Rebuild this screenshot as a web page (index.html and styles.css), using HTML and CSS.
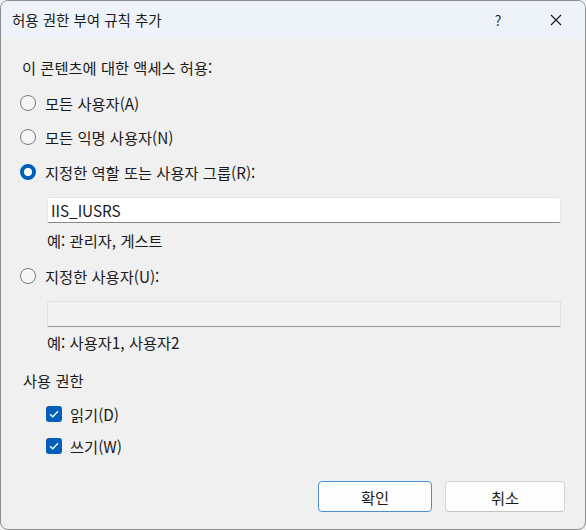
FILE: index.html
```html
<!DOCTYPE html>
<html lang="ko">
<head>
<meta charset="utf-8">
<link rel="stylesheet" href="styles.css">
</head>
<body>
<div class="window">
  <div class="titlebar">
    <div class="title">허용 권한 부여 규칙 추가</div>
    <div class="caption-btn help">?</div>
    <div class="caption-btn close">
      <svg width="12" height="12" viewBox="0 0 12 12"><path d="M1 1 L11 11 M11 1 L1 11" stroke="#1a1a1a" stroke-width="1.1" fill="none"/></svg>
    </div>
  </div>
  <div class="content">
    <div class="label">이 콘텐츠에 대한 액세스 허용:</div>
    <div class="radio-row r1"><span class="radio"></span><span>모든 사용자(A)</span></div>
    <div class="radio-row r2"><span class="radio"></span><span>모든 익명 사용자(N)</span></div>
    <div class="radio-row r3"><span class="radio checked"></span><span>지정한 역할 또는 사용자 그룹(R):</span></div>
    <div class="field">IIS_IUSRS</div>
    <div class="hint">예: 관리자, 게스트</div>
    <div class="radio-row r4"><span class="radio"></span><span>지정한 사용자(U):</span></div>
    <div class="field disabled"></div>
    <div class="hint h2">예: 사용자1, 사용자2</div>
    <div class="label perm">사용 권한</div>
    <div class="check-row c1"><span class="check"><svg width="10" height="8" viewBox="0 0 10 8"><path d="M1 4.2 L3.8 6.8 L9 1.2" stroke="#fff" stroke-width="1.3" fill="none"/></svg></span><span>읽기(D)</span></div>
    <div class="check-row c2"><span class="check"><svg width="10" height="8" viewBox="0 0 10 8"><path d="M1 4.2 L3.8 6.8 L9 1.2" stroke="#fff" stroke-width="1.3" fill="none"/></svg></span><span>쓰기(W)</span></div>
    <div class="buttons">
      <div class="btn default">확인</div>
      <div class="btn cancel">취소</div>
    </div>
  </div>
</div>
</body>
</html>
```
FILE: styles.css
```css
* { box-sizing: border-box; }
html, body { margin: 0; padding: 0; background: #f0f0f0; }
body {
  font-family: "Noto Sans CJK KR", "Noto Sans", sans-serif;
  font-size: 15.3px;
  color: #1a1a1a;
}
.window {
  width: 586px;
  height: 530px;
  border: 1px solid #8e8e8e;
  border-radius: 8px;
  overflow: hidden;
  background: #f0f0f0;
  display: flex;
  flex-direction: column;
}
.titlebar {
  height: 37px;
  background: #eef2f9;
  display: flex;
  align-items: center;
  flex-shrink: 0;
}
.title {
  flex: 1;
  padding-left: 11px;
  font-size: 14.5px;
  line-height: 20px;
  color: #1a1a1a;
}
.caption-btn {
  display: flex;
  align-items: center;
  justify-content: center;
  height: 37px;
}
.help {
  width: 58px;
  font-size: 14px;
}
.close {
  width: 58px;
}
.content {
  flex: 1;
  padding: 19px 24px 0 19px;
  display: flex;
  flex-direction: column;
}
.label { line-height: 20px; height: 20px; margin-left: 2px; }
.radio-row, .check-row {
  display: flex;
  align-items: center;
  height: 20px;
  line-height: 20px;
}
.radio {
  width: 16px;
  height: 16px;
  border-radius: 50%;
  border: 1px solid #7a7a7a;
  background: #f6f6f6;
  margin-right: 9px;
  flex-shrink: 0;
}
.radio.checked {
  border: 4.5px solid #005fb8;
  background: #ffffff;
}
.r1 { margin-top: 16px; }
.r2 { margin-top: 14px; }
.r3 { margin-top: 15px; }
.r4 { margin-top: 16px; }
.field {
  margin-left: 27px;
  margin-top: 15px;
  height: 26px;
  width: 514px;
  background: #ffffff;
  border: 1px solid #e6e6e6;
  border-bottom: 1px solid #868686;
  border-radius: 2px;
  padding-left: 3px;
  line-height: 24px;
}
.field.disabled {
  background: #f2f2f2;
  border-color: #e2e2e2;
  border-bottom-color: #9a9a9a;
}
.hint {
  margin-left: 27px;
  margin-top: 7px;
  line-height: 20px;
  height: 20px;
}
.h2 { margin-top: 5px; }
.perm { margin-left: 3px; margin-top: 18px; }
.check-row { margin-left: 26px; }
.c1 { margin-top: 14px; }
.c2 { margin-top: 12px; }
.check {
  width: 16px;
  height: 16px;
  border-radius: 3px;
  background: #005fb8;
  margin-right: 8px;
  display: flex;
  align-items: center;
  justify-content: center;
  flex-shrink: 0;
}
.buttons {
  display: flex;
  justify-content: flex-end;
  gap: 13px;
  margin-top: auto;
  margin-bottom: 17px;
  margin-right: -4px;
}
.btn {
  height: 31px;
  width: 114px;
  border: 1px solid #d3d3d3;
  border-bottom-color: #c2c2c2;
  border-radius: 4px;
  background: #fdfdfd;
  display: flex;
  align-items: center;
  justify-content: center;
}
.btn.default {
  border: 1px solid #4a8fd6;
}
.btn.cancel { width: 120px; }
```
